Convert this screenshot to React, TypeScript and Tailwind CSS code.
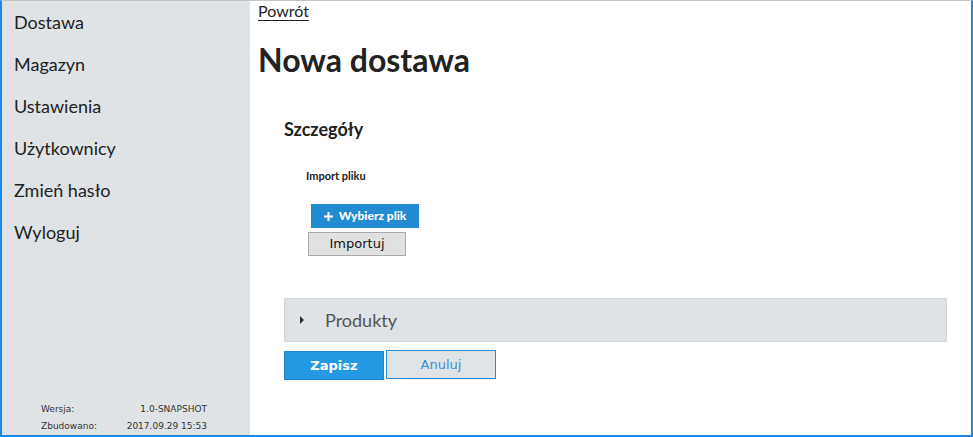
const menu = ["Dostawa", "Magazyn", "Ustawienia", "Użytkownicy", "Zmień hasło", "Wyloguj"];

const App = () => {
  return (
    <div className="flex h-[437px] w-[973px] border-t border-t-[#c4c4c4] border-l-2 border-r-2 border-b-2 border-l-[#1e88e5] border-r-[#1e88e5] border-b-[#1e88e5] overflow-hidden font-['Lato','Noto_Sans',sans-serif] text-[#222]">
      <aside className="flex w-[248px] shrink-0 flex-col justify-between bg-[#dfe3e6]">
        <ul className="pt-[9px]">
          {menu.map((m) => (
            <li key={m} className="h-[42px] pl-3 text-[18px] leading-[24px] text-[#222]">
              {m}
            </li>
          ))}
        </ul>
        <div className="pl-[39px] pr-[43px] font-['DejaVu_Sans',sans-serif] text-[9px] leading-[17px] text-[#333]">
          <div className="flex justify-between">
            <span>Wersja:</span>
            <span>1.0-SNAPSHOT</span>
          </div>
          <div className="flex justify-between">
            <span>Zbudowano:</span>
            <span>2017.09.29 15:53</span>
          </div>
        </div>
      </aside>
      <main className="flex-1 bg-white pl-2 pr-[24px]">
        <a className="block w-fit text-[16px] leading-[19px] text-[#222] underline underline-offset-[3px]" href="#">
          Powrót
        </a>
        <h1 className="mt-[20px] text-[32px] font-bold leading-[40px] text-[#222]">Nowa dostawa</h1>
        <div className="pl-[26px]">
          <h2 className="mt-[38px] text-[18px] font-bold leading-[22px]">Szczegóły</h2>
          <div className="pl-[22px]">
            <div className="mt-[29px] text-[11px] font-bold leading-[14px]">Import pliku</div>
            <button className="ml-[5px] mt-[21px] flex h-[24px] w-[108px] items-center justify-center gap-[6px] bg-[#238bd3] text-[12px] font-black text-white">
              <svg width="9" height="9" viewBox="0 0 9 9">
                <path d="M3.5 0h2v3.5H9v2H5.5V9h-2V5.5H0v-2h3.5z" fill="white" />
              </svg>
              Wybierz plik
            </button>
            <button className="ml-[2px] mt-[4px] block h-[24px] w-[98px] border border-[#a9a9a9] bg-[#e1e1e1] font-['DejaVu_Sans',sans-serif] text-[13px] text-[#111]">
              Importuj
            </button>
          </div>
          <div className="mt-[42px] flex h-[44px] items-center border border-[#d2d6d9] bg-[#dfe3e6]">
            <svg className="ml-[15px]" width="5" height="8" viewBox="0 0 5 8">
              <path d="M0 0l4 4-4 4z" fill="#333" />
            </svg>
            <span className="ml-[20px] text-[18px] text-[#555]">Produkty</span>
          </div>
          <div className="mt-[8px] flex items-start gap-[2px]">
            <button className="mt-[1px] h-[29px] w-[100px] border border-[#1e88d8] bg-[#2399e4] font-['DejaVu_Sans',sans-serif] text-[13px] font-bold text-white">
              Zapisz
            </button>
            <button className="h-[29px] w-[110px] border border-[#2a8ad4] bg-[#e0e4e7] font-['DejaVu_Sans',sans-serif] text-[13px] text-[#3a8fd9]">
              Anuluj
            </button>
          </div>
        </div>
      </main>
    </div>
  );
};

export default App;
